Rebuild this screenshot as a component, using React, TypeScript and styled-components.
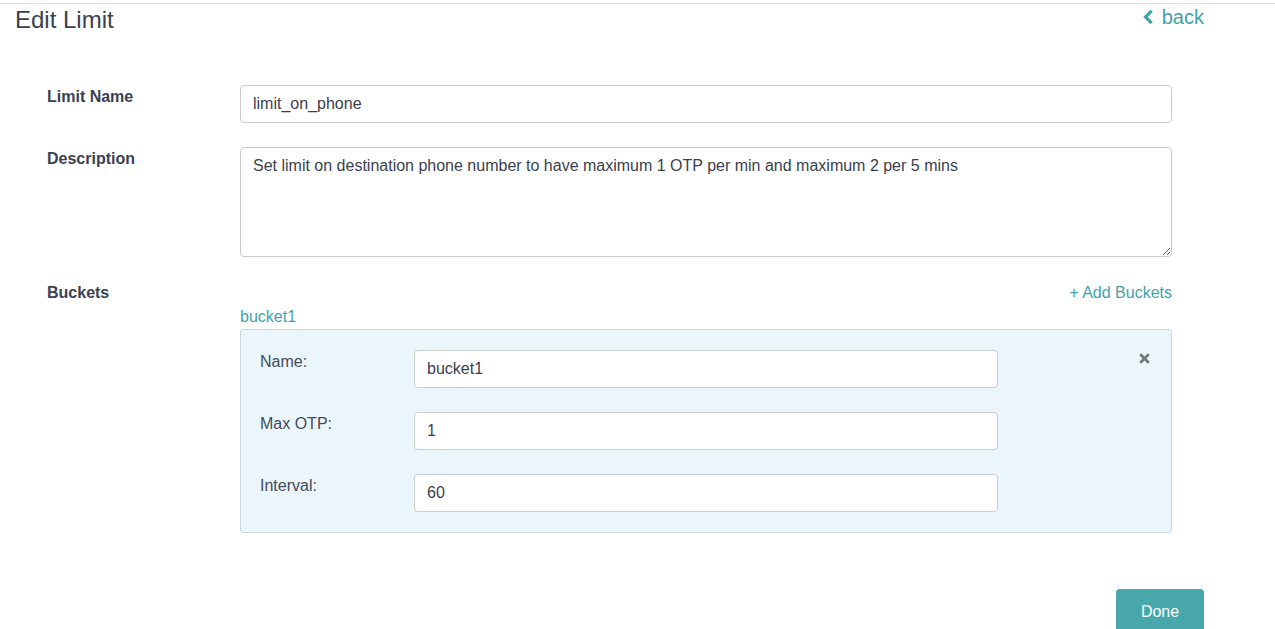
import React from 'react';
import styled, { createGlobalStyle } from 'styled-components';

const GlobalStyle = createGlobalStyle`
  html, body {
    margin: 0;
    padding: 0;
    background: #ffffff;
    font-family: "Liberation Sans", Arial, sans-serif;
    color: #3b4151;
  }
  * { box-sizing: border-box; }
`;

const Page = styled.div`
  width: 1275px;
  height: 629px;
  overflow: hidden;
  padding-top: 3px;
`;

const TopLine = styled.div`
  height: 1px;
  background: #dedede;
`;

const Content = styled.div`
  width: 1204px;
  padding-left: 15px;
`;

const Header = styled.div`
  display: flex;
  justify-content: space-between;
  align-items: flex-start;
`;

const Title = styled.h1`
  margin: 0;
  padding-top: 2px;
  font-size: 24px;
  font-weight: 400;
  line-height: 28px;
  color: #3b4151;
`;

const BackLink = styled.a`
  display: flex;
  align-items: center;
  gap: 9px;
  padding-top: 1px;
  font-size: 20px;
  line-height: 24px;
  color: #3fa3aa;
  text-decoration: none;
  cursor: pointer;
`;

const Form = styled.div`
  margin-top: 51px;
  padding-left: 32px;
  display: grid;
  grid-template-columns: 193px 932px;
  row-gap: 24px;
`;

const Label = styled.div`
  padding-top: 3px;
  font-size: 16px;
  font-weight: 700;
  line-height: 18px;
  color: #3b4151;
`;

const TextInput = styled.input`
  width: 100%;
  height: 38px;
  padding: 0 12px;
  border: 1px solid #cccccc;
  border-radius: 4px;
  background: #ffffff;
  font-family: "Liberation Sans", Arial, sans-serif;
  font-size: 16px;
  color: #3a3f4e;
  outline: none;
`;

const TextArea = styled.textarea`
  display: block;
  width: 100%;
  height: 110px;
  padding: 8px 12px;
  border: 1px solid #cccccc;
  border-radius: 4px;
  font-family: "Liberation Sans", Arial, sans-serif;
  font-size: 16px;
  line-height: 20px;
  color: #3a3f4e;
  outline: none;
`;

const BucketsHead = styled.div`
  display: flex;
  justify-content: flex-end;
  padding-top: 3px;
`;

const LinkText = styled.a`
  font-size: 16px;
  line-height: 18px;
  color: #3fa3aa;
  text-decoration: none;
  cursor: pointer;
`;

const BucketTitle = styled.div`
  margin-top: 6px;
  font-size: 16px;
  line-height: 18px;
  color: #3fa3aa;
`;

const Panel = styled.div`
  position: relative;
  margin-top: 3px;
  padding: 20px 19px;
  background: #eaf5fc;
  border: 1px solid #c9d7e0;
  border-radius: 3px;
  display: grid;
  grid-template-columns: 154px 584px;
  row-gap: 24px;
`;

const PanelLabel = styled.div`
  padding-top: 3px;
  font-size: 16px;
  line-height: 18px;
  color: #444b5a;
`;

const CloseButton = styled.button`
  position: absolute;
  top: 23px;
  right: 21px;
  padding: 0;
  border: none;
  background: none;
  color: #777777;
  display: flex;
  cursor: pointer;
`;

const Footer = styled.div`
  display: flex;
  justify-content: flex-end;
  margin-top: 56px;
`;

const DoneButton = styled.button`
  width: 88px;
  height: 46px;
  border: none;
  border-radius: 4px;
  background: #47a7ab;
  color: #ffffff;
  font-family: "Liberation Sans", Arial, sans-serif;
  font-size: 16px;
  cursor: pointer;
`;

const ChevronIcon = () => (
  <svg width="11" height="14" viewBox="0 0 11 14" aria-hidden="true">
    <path d="M8.5 2 L3.5 7 L8.5 12" fill="none" stroke="currentColor" strokeWidth="3.2" strokeLinecap="square" />
  </svg>
);

const TimesIcon = () => (
  <svg width="11" height="11" viewBox="0 0 11 11" aria-hidden="true">
    <path d="M2 2 L9 9 M9 2 L2 9" fill="none" stroke="currentColor" strokeWidth="2.8" strokeLinecap="round" />
  </svg>
);

const bucketFields = [
  { label: 'Name:', value: 'bucket1' },
  { label: 'Max OTP:', value: '1' },
  { label: 'Interval:', value: '60' },
];

export default function App() {
  return (
    <Page>
      <GlobalStyle />
      <TopLine />
      <Content>
        <Header>
          <Title>Edit Limit</Title>
          <BackLink>
            <ChevronIcon />
            back
          </BackLink>
        </Header>
        <Form>
          <Label>Limit Name</Label>
          <TextInput defaultValue="limit_on_phone" />
          <Label>Description</Label>
          <TextArea defaultValue="Set limit on destination phone number to have maximum 1 OTP per min and maximum 2 per 5 mins" />
          <Label>Buckets</Label>
          <div>
            <BucketsHead>
              <LinkText>+ Add Buckets</LinkText>
            </BucketsHead>
            <BucketTitle>bucket1</BucketTitle>
            <Panel>
              {bucketFields.map((f) => (
                <React.Fragment key={f.label}>
                  <PanelLabel>{f.label}</PanelLabel>
                  <TextInput defaultValue={f.value} />
                </React.Fragment>
              ))}
              <CloseButton aria-label="remove bucket">
                <TimesIcon />
              </CloseButton>
            </Panel>
          </div>
        </Form>
        <Footer>
          <DoneButton>Done</DoneButton>
        </Footer>
      </Content>
    </Page>
  );
}
